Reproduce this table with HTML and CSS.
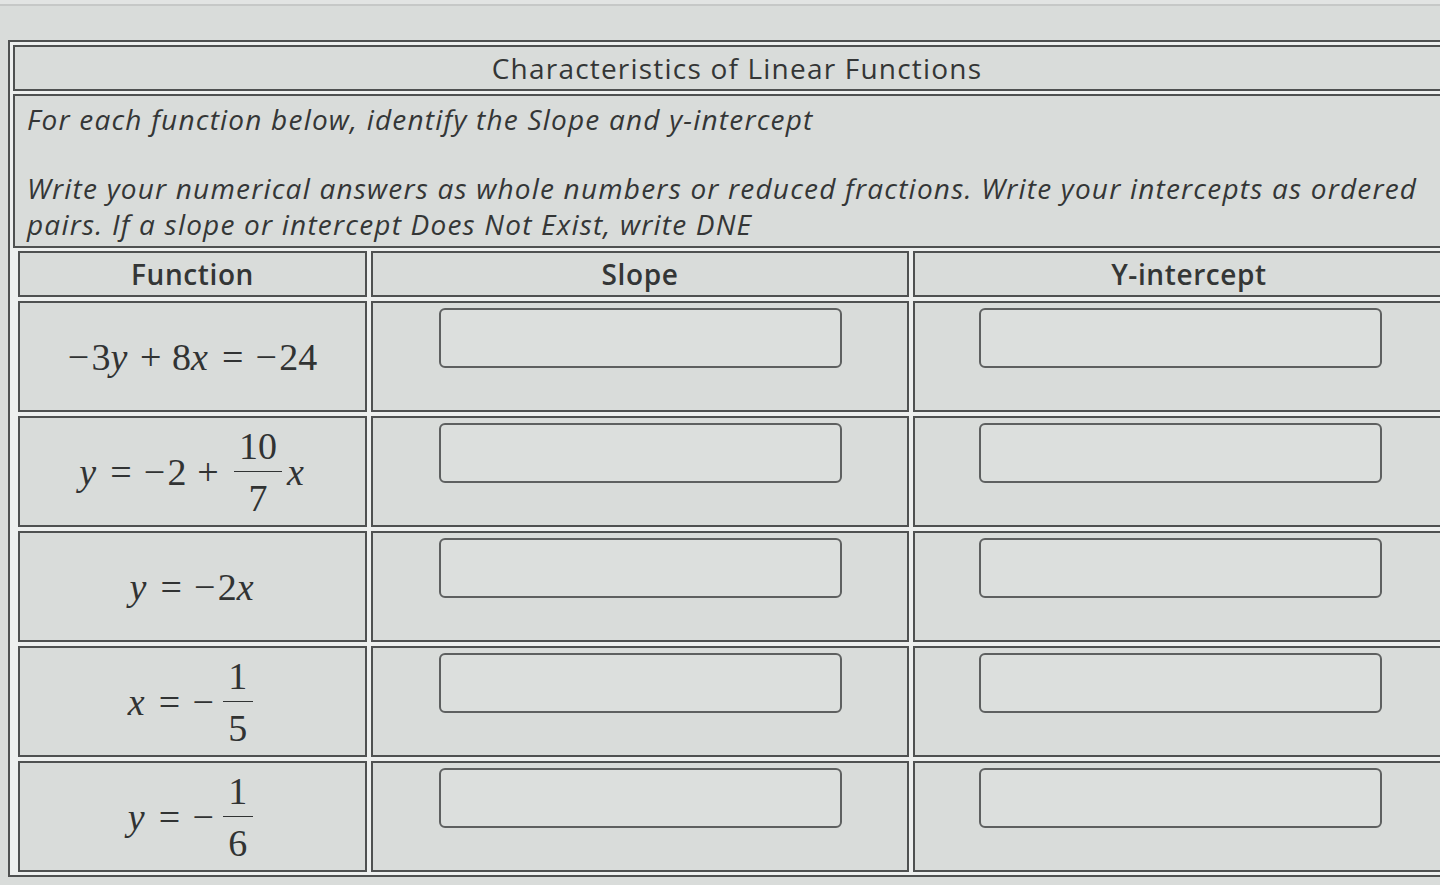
FILE: index.html
```html
<!DOCTYPE html>
<html lang="en">
<head>
<meta charset="utf-8">
<title>Characteristics of Linear Functions</title>
<link rel="stylesheet" href="styles.css">
</head>
<body>
<div class="page">
  <div class="topline"></div>
  <div class="sheet">
    <div class="title">Characteristics of Linear Functions</div>
    <div class="intro">
      <p class="line">For each function below, identify the Slope and y-intercept</p>
      <p class="line gap">Write your numerical answers as whole numbers or reduced fractions. Write your intercepts as ordered</p>
      <p class="line">pairs. If a slope or intercept Does Not Exist, write DNE</p>
    </div>
    <div class="grid">
      <div class="cell head">Function</div>
      <div class="cell head">Slope</div>
      <div class="cell head">Y-intercept</div>

      <div class="cell fn"><span class="math"><span class="op-u">−</span>3<i>y</i><span class="bin">+</span>8<i>x</i><span class="rel">=</span><span class="op-u">−</span>24</span></div>
      <div class="cell ans"><div class="box"></div></div>
      <div class="cell ans"><div class="box"></div></div>

      <div class="cell fn"><span class="math"><i>y</i><span class="rel">=</span><span class="op-u">−</span>2<span class="bin">+</span><span class="frac"><span class="num">10</span><span class="den">7</span></span><i>x</i></span></div>
      <div class="cell ans"><div class="box"></div></div>
      <div class="cell ans"><div class="box"></div></div>

      <div class="cell fn"><span class="math"><i>y</i><span class="rel">=</span><span class="op-u">−</span>2<i>x</i></span></div>
      <div class="cell ans"><div class="box"></div></div>
      <div class="cell ans"><div class="box"></div></div>

      <div class="cell fn"><span class="math"><i>x</i><span class="rel">=</span><span class="op-u neg">−</span><span class="frac"><span class="num">1</span><span class="den">5</span></span></span></div>
      <div class="cell ans"><div class="box"></div></div>
      <div class="cell ans"><div class="box"></div></div>

      <div class="cell fn"><span class="math"><i>y</i><span class="rel">=</span><span class="op-u neg">−</span><span class="frac"><span class="num">1</span><span class="den">6</span></span></span></div>
      <div class="cell ans"><div class="box"></div></div>
      <div class="cell ans"><div class="box"></div></div>
    </div>
  </div>
</div>
</body>
</html>
```

FILE: styles.css
```css
html, body {
  margin: 0;
  padding: 0;
  background: #d9dcda;
}

.page {
  width: 1440px;
  height: 885px;
  overflow: hidden;
  padding: 0 0 0 8px;
  box-sizing: border-box;
  font-family: "Open Sans", "DejaVu Sans", sans-serif;
  color: #343636;
}

.topline {
  height: 4px;
  border-bottom: 2px solid #c6c8c7;
  margin: 0 0 34px -8px;
  background: #e2e4e3;
}

.sheet {
  width: 1452px;
  border: 2px solid #4f5151;
  padding: 3px;
  background: #eef0ef;
  display: flex;
  flex-direction: column;
  gap: 3px;
}

.title {
  height: 42px;
  border: 2px solid #4f5151;
  background: #d9dcda;
  font-size: 28px;
  letter-spacing: 1.2px;
  line-height: 42px;
  text-align: center;
  padding-right: 4px;
}

.intro {
  height: 145px;
  border: 2px solid #4f5151;
  background: #d9dcda;
  padding: 5px 0 0 12px;
  box-sizing: content-box;
  font-style: italic;
  font-size: 28px;
  letter-spacing: 1.2px;
}

.line {
  margin: 0;
  line-height: 36px;
  white-space: nowrap;
}

.line.gap {
  margin-top: 33px;
}

.grid {
  display: grid;
  grid-template-columns: 349px 538px 1fr;
  grid-template-rows: 46px repeat(5, 111px);
  gap: 4px;
  margin-left: 5px;
}

.cell {
  border: 2px solid #4f5151;
  background: #d9dcda;
  box-sizing: border-box;
}

.head {
  font-size: 28px;
  font-weight: 600;
  letter-spacing: 0.6px;
  text-align: center;
  line-height: 42px;
}

.fn {
  display: flex;
  align-items: center;
  justify-content: center;
}

.ans {
  padding-top: 5px;
}

.box {
  width: 403px;
  height: 60px;
  margin: 0 auto;
  border: 2px solid #5e6060;
  border-radius: 6px;
  box-sizing: border-box;
  background: #dcdfdd;
}

.ans:nth-child(3n) .box {
  margin: 0 0 0 64px;
}

.math {
  font-family: "Liberation Serif", "DejaVu Serif", serif;
  font-size: 38px;
  color: #313333;
  display: inline-flex;
  align-items: center;
  white-space: nowrap;
}

.math i {
  font-style: italic;
  padding-right: 2px;
}

.bin {
  margin: 0 0.28em;
}

.rel {
  margin: 0 0.32em;
}

.op-u {
  margin-right: 0.06em;
}

.op-u.neg {
  margin-right: 0.12em;
}

.frac {
  display: inline-flex;
  flex-direction: column;
  align-items: center;
  margin: 0 0.12em;
  line-height: 1;
}

.num {
  padding: 0 0.14em 6px;
  border-bottom: 1.5px solid #313333;
}

.den {
  padding: 7px 0.14em 0;
}
```
